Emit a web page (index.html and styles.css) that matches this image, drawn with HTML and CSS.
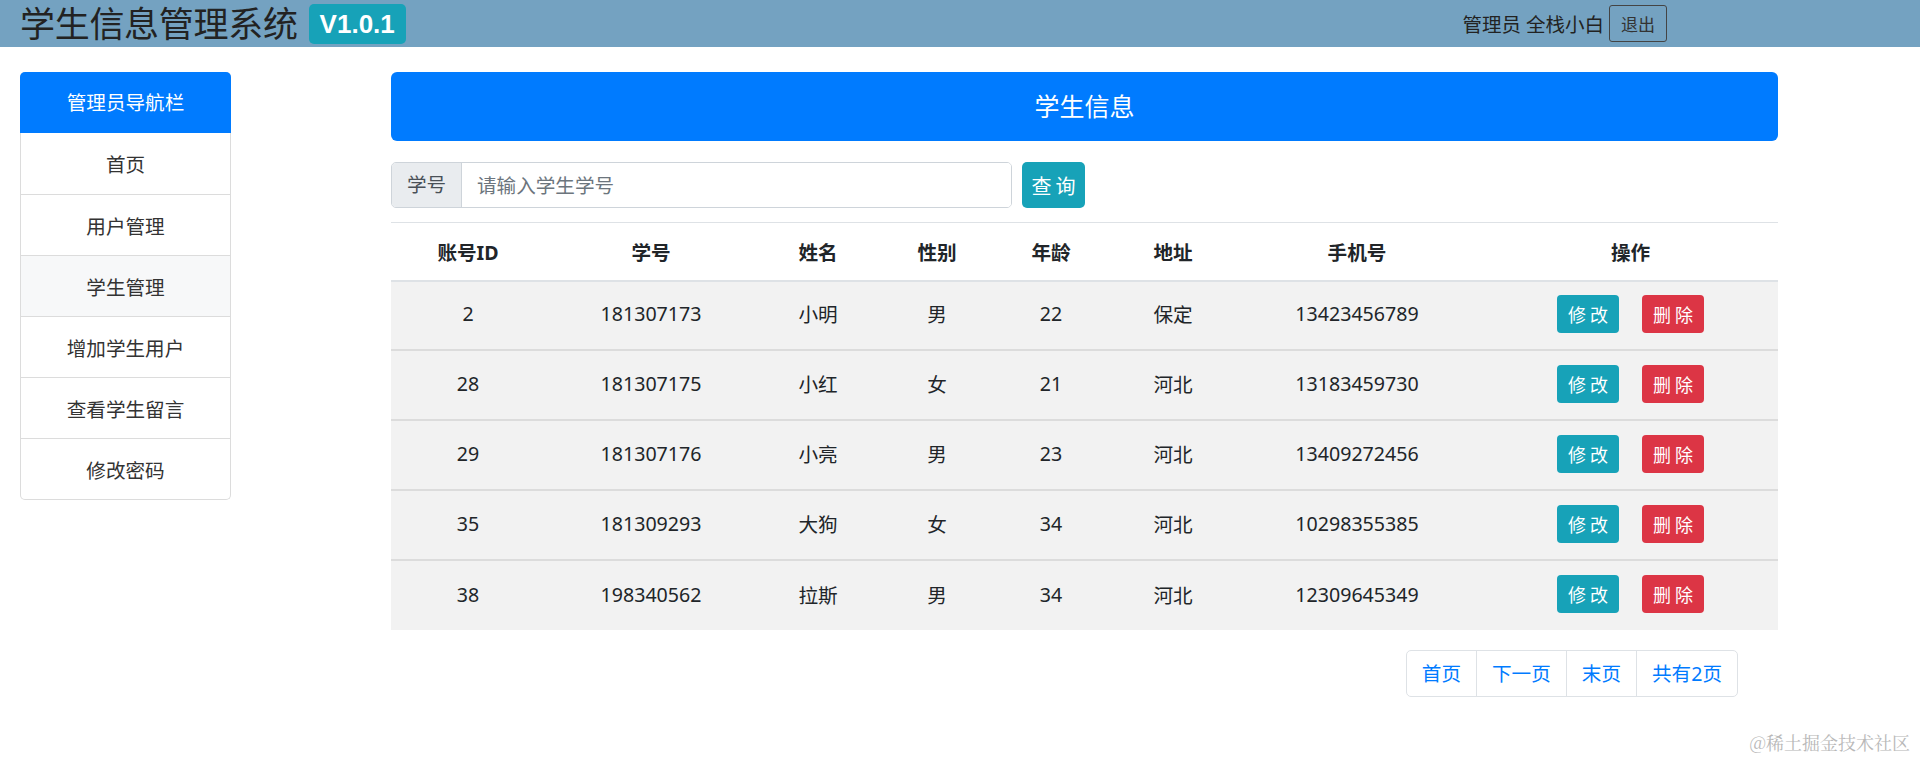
FILE: index.html
```html
<!DOCTYPE html>
<html lang="zh-CN">
<head>
  <meta charset="UTF-8">
  <meta name="viewport" content="width=device-width, initial-scale=1.0">
  <title>学生信息管理系统</title>
  <link rel="stylesheet" href="styles.css">
</head>
<body>

<div class="topbar">
  <div class="brand">
    <span class="brand-title">学生信息管理系统</span>
    <span class="badge">V1.0.1</span>
  </div>
  <div class="user-box">
    <span class="user-name">管理员 全栈小白</span>
    <button class="btn-logout">退出</button>
  </div>
</div>

<div class="layout">
  <div class="side-nav">
    <div class="side-head">管理员导航栏</div>
    <a class="side-item">首页</a>
    <a class="side-item">用户管理</a>
    <a class="side-item active">学生管理</a>
    <a class="side-item">增加学生用户</a>
    <a class="side-item">查看学生留言</a>
    <a class="side-item">修改密码</a>
  </div>

  <div class="main">
    <div class="banner">学生信息</div>

    <div class="search-row">
      <div class="input-group">
        <span class="input-label">学号</span>
        <input type="text" class="input-text" placeholder="请输入学生学号">
      </div>
      <button class="btn btn-info btn-search">查询</button>
    </div>

    <table class="data-table">
      <thead>
        <tr>
          <th class="c-id">账号ID</th>
          <th class="c-no">学号</th>
          <th class="c-name">姓名</th>
          <th class="c-sex">性别</th>
          <th class="c-age">年龄</th>
          <th class="c-addr">地址</th>
          <th class="c-phone">手机号</th>
          <th class="c-op">操作</th>
        </tr>
      </thead>
      <tbody id="rows"></tbody>
    </table>

    <div class="pager-wrap">
      <ul class="pager">
        <li><a>首页</a></li>
        <li><a>下一页</a></li>
        <li><a>末页</a></li>
        <li><a>共有2页</a></li>
      </ul>
    </div>
  </div>
</div>

<div class="watermark">@稀土掘金技术社区</div>

<script>
  const students = [
    { id: 2, no: '181307173', name: '小明', sex: '男', age: 22, addr: '保定', phone: '13423456789' },
    { id: 28, no: '181307175', name: '小红', sex: '女', age: 21, addr: '河北', phone: '13183459730' },
    { id: 29, no: '181307176', name: '小亮', sex: '男', age: 23, addr: '河北', phone: '13409272456' },
    { id: 35, no: '181309293', name: '大狗', sex: '女', age: 34, addr: '河北', phone: '10298355385' },
    { id: 38, no: '198340562', name: '拉斯', sex: '男', age: 34, addr: '河北', phone: '12309645349' }
  ];

  function displayStudents() {
    const tbody = document.getElementById('rows');
    tbody.innerHTML = '';

    students.forEach((s) => {
      const tr = document.createElement('tr');
      tr.innerHTML = `
        <td>${s.id}</td>
        <td>${s.no}</td>
        <td>${s.name}</td>
        <td>${s.sex}</td>
        <td>${s.age}</td>
        <td>${s.addr}</td>
        <td>${s.phone}</td>
        <td>
          <button class="btn btn-info">修改</button>
          <button class="btn btn-danger">删除</button>
        </td>
      `;
      tbody.appendChild(tr);
    });
  }

  displayStudents();
</script>

</body>
</html>
```

FILE: styles.css
```css
* {
  box-sizing: border-box;
}
body {
  margin: 0;
  font-family: "Noto Sans", "Noto Sans CJK SC", sans-serif;
  font-size: 19.6px;
  color: #212529;
  background: #fff;
}
.topbar {
  height: 47px;
  background-color: #74a2c1;
  display: flex;
  justify-content: space-between;
  align-items: center;
  padding: 0 253px 0 20px;
}
.brand {
  display: flex;
  align-items: center;
}
.brand-title {
  font-size: 35px;
  line-height: 47px;
  color: #222;
  letter-spacing: -0.3px;
}
.badge {
  margin-left: 11px;
  background-color: #17a2b8;
  color: #fff;
  font-family: "Liberation Sans", Arial, sans-serif;
  font-weight: bold;
  font-size: 26px;
  line-height: 40px;
  padding: 0 11px;
  border-radius: 5px;
}
.user-box {
  display: flex;
  align-items: center;
}
.user-name {
  font-size: 19.5px;
  color: #222;
}
.btn-logout {
  margin-left: 5px;
  height: 37px;
  padding: 0 11px;
  font-family: inherit;
  font-size: 17px;
  color: #333;
  background: transparent;
  border: 1px solid #444;
  border-radius: 3px;
}
.layout {
  display: flex;
  align-items: flex-start;
  padding: 25px 20px 0 20px;
}
.side-nav {
  width: 211px;
  flex-shrink: 0;
  border-radius: 5px;
  border: 1px solid #dcdcdc;
  border-top: none;
}
.side-head {
  height: 61px;
  line-height: 61px;
  text-align: center;
  background-color: #007bff;
  color: #fff;
  font-size: 19.6px;
  border-radius: 5px 5px 0 0;
  margin: 0 -1px;
}
.side-item {
  display: block;
  height: 61px;
  padding-top: 3px;
  line-height: 57px;
  text-align: center;
  border-top: 1px solid #dcdcdc;
  color: #333;
}
.side-item:nth-child(2) {
  border-top: none;
}
.side-item.active {
  background-color: #f7f8f9;
}
.main {
  margin-left: 160px;
  width: 1387px;
}
.banner {
  height: 69px;
  line-height: 69px;
  background-color: #007bff;
  color: #fff;
  text-align: center;
  font-size: 25px;
  border-radius: 6px;
}
.search-row {
  display: flex;
  margin-top: 21px;
  height: 46px;
}
.input-group {
  display: flex;
  width: 621px;
  border: 1px solid #ced4da;
  border-radius: 5px;
  overflow: hidden;
}
.input-label {
  width: 70px;
  background-color: #e9ecef;
  border-right: 1px solid #ced4da;
  text-align: center;
  line-height: 44px;
  color: #495057;
}
.input-text {
  flex: 1;
  border: none;
  outline: none;
  padding: 0 15px;
  font-family: inherit;
  font-size: 19.6px;
  color: #495057;
}
.input-text::placeholder {
  color: #6c757d;
}
.btn {
  font-family: inherit;
  color: #fff;
  border: none;
  border-radius: 4px;
  letter-spacing: 4px;
  cursor: pointer;
}
.btn-info {
  background-color: #17a2b8;
}
.btn-danger {
  background-color: #dc3545;
}
.btn-search {
  margin-left: 10px;
  width: 63px;
  font-size: 20px;
  padding: 0 0 0 4px;
  border-radius: 5px;
}
.data-table {
  width: 100%;
  margin-top: 14px;
  border-collapse: collapse;
  table-layout: fixed;
  border-top: 1px solid #dee2e6;
}
.data-table th {
  height: 58px;
  padding: 0;
  font-weight: bold;
  text-align: center;
  border-bottom: 2px solid #dee2e6;
}
.data-table td {
  height: 70px;
  padding: 0 0 3px 0;
  text-align: center;
  background-color: #f2f2f2;
  border-top: 2px solid #dcdcdc;
}
.data-table tbody tr:first-child td {
  border-top: none;
  height: 69.5px;
}
.data-table th:last-child,
.data-table td:last-child {
  padding-left: 8px;
}
.c-id { width: 154px; }
.c-no { width: 212px; }
.c-name { width: 122px; }
.c-sex { width: 116px; }
.c-age { width: 112px; }
.c-addr { width: 132px; }
.c-phone { width: 236px; }
.data-table td .btn {
  width: 62px;
  height: 38px;
  font-size: 18px;
  padding: 0 0 0 4px;
  margin: 0 9px;
}
.pager-wrap {
  display: flex;
  justify-content: flex-end;
  padding-right: 40px;
  margin-top: 20px;
}
.pager {
  display: flex;
  list-style: none;
  margin: 0;
  padding: 0;
}
.pager li a {
  display: block;
  height: 47px;
  line-height: 45px;
  padding: 0 15px;
  color: #007bff;
  border: 1px solid #dee2e6;
  margin-left: -1px;
}
.pager li:first-child a {
  border-radius: 5px 0 0 5px;
}
.pager li:last-child a {
  border-radius: 0 5px 5px 0;
}
.watermark {
  position: absolute;
  right: 10px;
  bottom: 6px;
  font-family: "Noto Serif CJK SC", "Noto Sans CJK SC", serif;
  font-size: 18px;
  color: #b8b8b8;
}
```
